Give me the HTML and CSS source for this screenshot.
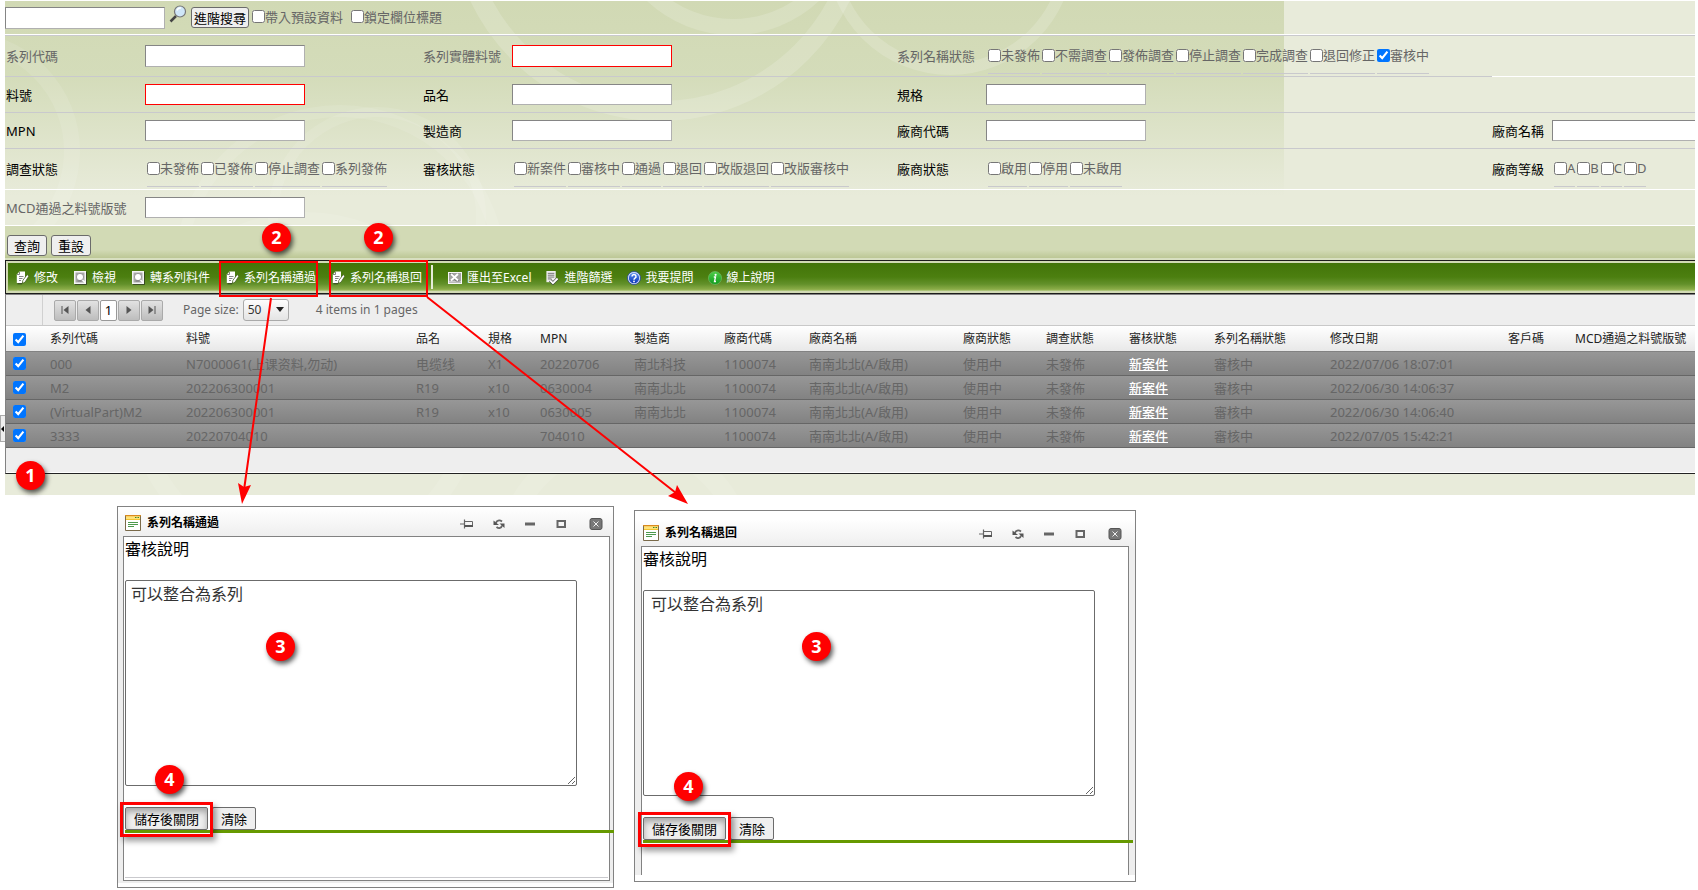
FILE: index.html
```html
<!DOCTYPE html>
<html lang="zh-Hant">
<head>
<meta charset="utf-8">
<title>系列料件</title>
<link rel="stylesheet" href="styles.css">
</head>
<body>
<svg class="defs" aria-hidden="true">
  <defs>
    <linearGradient id="gBlue" x1="0" y1="0" x2="0" y2="1"><stop offset="0" stop-color="#5b8ff0"/><stop offset="1" stop-color="#0b35b8"/></linearGradient>
    <linearGradient id="gGreen" x1="0" y1="0" x2="0" y2="1"><stop offset="0" stop-color="#4fd04a"/><stop offset="1" stop-color="#0f9a1c"/></linearGradient>
    <symbol id="i-edit" viewBox="0 0 13 14">
      <path d="M3.500.5H9v8l-3 3.500H.8V3.500z" fill="#fff"/><path d="M3.500 1v2.500H1M3 5.500h4.500M3 7.500h3.500M3 9.500h2" stroke="#777" fill="none" stroke-width=".9"/>
      <path d="M11.200 3.500L6.800 9.500L6.300 12.500L9 11.200L12.800 5.200z" fill="#fff" stroke="#33530c" stroke-width=".7"/><path d="M1.500 12.800h4.500" stroke="#222" stroke-opacity=".7"/>
    </symbol>
    <symbol id="i-view" viewBox="0 0 13 14">
      <path d="M0 0h12v13H0z" fill="#f4f4f4"/><path d="M1.500 1.500h9v10h-9z" fill="#a9a9a9"/><circle cx="6" cy="6" r="3.600" fill="#fff" stroke="#8a8a8a" stroke-width=".8"/><path d="M3.500 10h4" stroke="#777"/><path d="M8.500 9l2.500 2.500" stroke="#fff" stroke-width="1.500"/><path d="M12.500 1v12.500H1" stroke="#222" stroke-opacity=".6" fill="none"/>
    </symbol>
    <symbol id="i-excel" viewBox="0 0 14 14">
      <path d="M0 1h14v12H0z" fill="#f6f6f6"/><path d="M1 2h12v8.500H1z" fill="#a2a2a2"/><path d="M1 2h3l8 8.500H8z" fill="#777"/><path d="M3 3l7 6.500M10 3L3 9.500" stroke="#fff" stroke-width="1.800"/><path d="M1 11.500h12" stroke="#bbb"/>
    </symbol>
    <symbol id="i-filter" viewBox="0 0 14 15">
      <path d="M1 0h10v12H1z" fill="#eee"/><path d="M2.500 2.500h7M2.500 4.500h7M2.500 6.500h7M2.500 8.500h4" stroke="#6d6d6d"/><path d="M5 10l3 3 5-5" stroke="#333" stroke-width="3.200" fill="none"/><path d="M5 10l3 3 5-5" stroke="#fff" stroke-width="2" fill="none"/>
    </symbol>
    <symbol id="i-help" viewBox="0 0 14 14">
      <circle cx="7" cy="7" r="6.500" fill="#e8eefc" stroke="#1a3c9c" stroke-width=".8"/><circle cx="7" cy="7" r="5.200" fill="url(#gBlue)"/><path d="M5 5.500a2 2 0 1 1 3 1.700q-1 .6-1 1.500" stroke="#fff" stroke-width="1.500" fill="none"/><circle cx="7" cy="10.400" r=".9" fill="#fff"/>
    </symbol>
    <symbol id="i-info" viewBox="0 0 14 14">
      <circle cx="7" cy="7" r="6.500" fill="url(#gGreen)" stroke="#6fb560" stroke-width=".8"/><circle cx="7.600" cy="3.800" r="1.100" fill="#fff"/><path d="M5.800 6h1.700l-1 4.500h1.500" stroke="#fff" stroke-width="1.300" fill="none"/>
    </symbol>
    <symbol id="i-first" viewBox="0 0 10 10"><path d="M2 1v8" stroke="#555" stroke-width="1"/><path d="M8.500 1v8L3.500 5z" fill="#555"/></symbol>
    <symbol id="i-prev" viewBox="0 0 10 10"><path d="M7.500 1v8L2.500 5z" fill="#555"/></symbol>
    <symbol id="i-next" viewBox="0 0 10 10"><path d="M2.500 1v8L7.500 5z" fill="#555"/></symbol>
    <symbol id="i-last" viewBox="0 0 10 10"><path d="M1.500 1v8L6.500 5z" fill="#555"/><path d="M8 1v8" stroke="#555"/></symbol>
    <symbol id="i-window" viewBox="0 0 16 16">
      <path d="M.5.500h15v15H.5z" fill="#fff" stroke="#7a6a4a"/><path d="M1 1h14v4H1z" fill="#ffe27a"/><path d="M0 0h16v1.200H0z" fill="#d98a1e"/><path d="M1 4.500h14" stroke="#f2c230"/><path d="M10 2.500h1.500M12.500 2.500H14" stroke="#3b8a2a" stroke-width="1.200"/><path d="M3 7.500h10M3 9.500h10M3 11.500h6" stroke="#4c9a4c"/>
    </symbol>
    <symbol id="i-pin" viewBox="0 0 14 12"><path d="M0 6h4.500M4.500 1.500v9" stroke="#666" stroke-width="1.200"/><path d="M4.500 3.500h8v5h-8" fill="none" stroke="#666"/><path d="M4.500 8h8.500" stroke="#555" stroke-width="2"/></symbol>
    <symbol id="i-reload" viewBox="0 0 12 12"><path d="M3 5C3.500 2.500 6.500 1.500 9 3.500" fill="none" stroke="#666" stroke-width="1.800"/><path d="M.5 2.500v4.500H6z" fill="#555"/><path d="M9 7.500C8.500 10 6 11 3.500 9" fill="none" stroke="#666" stroke-width="1.800"/><path d="M11.500 10V5.500H6.500z" fill="#555"/></symbol>
    <symbol id="i-min" viewBox="0 0 12 12"><path d="M1 4.500h10v3H1z" fill="#666"/></symbol>
    <symbol id="i-max" viewBox="0 0 12 12"><path d="M2.500 3h7.500v6H2.500z" fill="none" stroke="#666" stroke-width="2"/></symbol>
    <symbol id="i-close" viewBox="0 0 14 12"><rect x="1" y=".5" width="12" height="11" rx="2" fill="#777" stroke="#555"/><path d="M4.500 3.500l5 5M9.500 3.500l-5 5" stroke="#eee"/></symbol>
  </defs>
</svg>

<main class="app">
  <svg class="swirls" aria-hidden="true" fill="none" stroke="#fff">
    <g stroke-opacity=".16">
      <circle cx="728" cy="-92" r="118" stroke-width="16"/>
      <circle cx="655" cy="-90" r="200" stroke-width="20"/>
      <circle cx="945" cy="-50" r="118" stroke-width="12"/>
    </g>
    <g stroke-opacity=".1">
      <circle cx="-45" cy="150" r="112" stroke-width="16"/>
      <circle cx="372" cy="215" r="104" stroke-width="10"/>
      <circle cx="335" cy="270" r="160" stroke-width="12"/>
      <circle cx="300" cy="390" r="170" stroke-width="18"/>
      <circle cx="620" cy="560" r="120" stroke-width="20"/>
    </g>
  </svg>

  <section class="searchbar">
    <input class="txt" type="text" aria-label="搜尋">
    <svg class="lens" viewBox="0 0 18 18" aria-hidden="true"><path d="M7 11L1.500 16.500" stroke="#444" stroke-width="2.500"/><circle cx="11" cy="6.500" r="5.500" fill="#cfe6f8" stroke="#777" stroke-width="1.200"/><path d="M8 5.500q1-3 4-2.500" stroke="#fff" stroke-width="1.500" fill="none"/></svg>
    <button class="btn btn-tight" type="button">進階搜尋</button>
    <label class="opt"><input type="checkbox">帶入預設資料</label>
    <label class="opt opt-next"><input type="checkbox">鎖定欄位標題</label>
  </section>

  <section class="filters">
    <div class="frow tall">
      <label class="cell dim" for="f1">系列代碼</label><div class="cell"><input class="txt" id="f1" type="text"></div>
      <label class="cell dim" for="f2">系列實體料號</label><div class="cell"><input class="txt req" id="f2" type="text"></div>
      <span class="cell dim">系列名稱狀態</span>
      <div class="cell checks">
        <label><input type="checkbox">未發佈</label><label><input type="checkbox">不需調查</label><label><input type="checkbox">發佈調查</label><label><input type="checkbox">停止調查</label><label><input type="checkbox">完成調查</label><label><input type="checkbox">退回修正</label><label><input type="checkbox" checked>審核中</label>
      </div>
      <span class="cell pale rest"></span>
    </div>
    <div class="frow">
      <label class="cell" for="f3">料號</label><div class="cell"><input class="txt req" id="f3" type="text"></div>
      <label class="cell" for="f4">品名</label><div class="cell"><input class="txt" id="f4" type="text"></div>
      <label class="cell" for="f5">規格</label><div class="cell"><input class="txt" id="f5" type="text"></div>
      <span class="cell rest"></span>
    </div>
    <div class="frow">
      <label class="cell" for="f6">MPN</label><div class="cell"><input class="txt" id="f6" type="text"></div>
      <label class="cell" for="f7">製造商</label><div class="cell"><input class="txt" id="f7" type="text"></div>
      <label class="cell" for="f8">廠商代碼</label><div class="cell"><input class="txt" id="f8" type="text"></div>
      <label class="cell" for="f9">廠商名稱</label><div class="cell clip"><input class="txt" id="f9" type="text"></div>
    </div>
    <div class="frow tall last">
      <span class="cell">調查狀態</span>
      <div class="cell checks"><label><input type="checkbox">未發佈</label><label><input type="checkbox">已發佈</label><label><input type="checkbox">停止調查</label><label><input type="checkbox">系列發佈</label></div>
      <span class="cell">審核狀態</span>
      <div class="cell checks"><label><input type="checkbox">新案件</label><label><input type="checkbox">審核中</label><label><input type="checkbox">通過</label><label><input type="checkbox">退回</label><label><input type="checkbox">改版退回</label><label><input type="checkbox">改版審核中</label></div>
      <span class="cell">廠商狀態</span>
      <div class="cell checks"><label><input type="checkbox">啟用</label><label><input type="checkbox">停用</label><label><input type="checkbox">未啟用</label></div>
      <span class="cell">廠商等級</span>
      <div class="cell checks"><label><input type="checkbox">A</label><label><input type="checkbox">B</label><label><input type="checkbox">C</label><label><input type="checkbox">D</label></div>
    </div>
    <div class="frow last">
      <label class="cell dim" for="f10">MCD通過之料號版號</label><div class="cell"><input class="txt" id="f10" type="text"></div>
      <span class="cell wide"></span>
    </div>
  </section>

  <section class="actions">
    <button class="btn" type="button">查詢</button>
    <button class="btn" type="button">重設</button>
  </section>

  <nav class="toolbar">
    <div class="tools">
      <button type="button"><svg><use href="#i-edit"/></svg>修改</button>
      <button type="button"><svg><use href="#i-view"/></svg>檢視</button>
      <button type="button"><svg><use href="#i-view"/></svg>轉系列料件</button>
      <button type="button"><svg><use href="#i-edit"/></svg>系列名稱通過</button>
      <button type="button"><svg><use href="#i-edit"/></svg>系列名稱退回</button>
    </div>
    <div class="tools tools-more">
      <button type="button"><svg><use href="#i-excel"/></svg>匯出至Excel</button>
      <button type="button"><svg><use href="#i-filter"/></svg>進階篩選</button>
      <button type="button"><svg><use href="#i-help"/></svg>我要提問</button>
      <button type="button"><svg><use href="#i-info"/></svg>線上說明</button>
    </div>
  </nav>

  <section class="grid">
    <div class="pager">
      <span class="pager-gap"></span>
      <div class="pages">
        <button type="button" aria-label="首頁"><svg><use href="#i-first"/></svg></button>
        <button type="button" aria-label="上一頁"><svg><use href="#i-prev"/></svg></button>
        <button type="button" class="current">1</button>
        <button type="button" aria-label="下一頁"><svg><use href="#i-next"/></svg></button>
        <button type="button" aria-label="末頁"><svg><use href="#i-last"/></svg></button>
      </div>
      <label class="size-label" for="psize">Page size:</label>
      <span class="size"><select id="psize"><option>50</option></select><svg viewBox="0 0 8 5" aria-hidden="true"><path d="M0 0h8L4 5z" fill="#222"/></svg></span>
      <span class="count">4 items in 1 pages</span>
    </div>
    <table>
      <colgroup><col class="c36"><col class="c136"><col class="c230"><col class="c72"><col class="c52"><col class="c94"><col class="c90"><col class="c85"><col class="c154"><col class="c83"><col class="c83"><col class="c85"><col class="c116"><col class="c178"><col class="c67"><col class="c128"></colgroup>
      <thead>
        <tr><th><input type="checkbox" checked aria-label="全選"></th><th>系列代碼</th><th>料號</th><th>品名</th><th>規格</th><th>MPN</th><th>製造商</th><th>廠商代碼</th><th>廠商名稱</th><th>廠商狀態</th><th>調查狀態</th><th>審核狀態</th><th>系列名稱狀態</th><th>修改日期</th><th>客戶碼</th><th>MCD通過之料號版號</th></tr>
      </thead>
      <tbody>
        <tr><td><input type="checkbox" checked aria-label="選取 000"></td><td>000</td><td>N7000061(上课资料,勿动)</td><td>电缆线</td><td>X1</td><td>20220706</td><td>南北科技</td><td>1100074</td><td>南南北北(A/啟用)</td><td>使用中</td><td>未發佈</td><td><a href="#">新案件</a></td><td>審核中</td><td>2022/07/06 18:07:01</td><td></td><td></td></tr>
        <tr><td><input type="checkbox" checked aria-label="選取 M2"></td><td>M2</td><td>202206300001</td><td>R19</td><td>x10</td><td>0630004</td><td>南南北北</td><td>1100074</td><td>南南北北(A/啟用)</td><td>使用中</td><td>未發佈</td><td><a href="#">新案件</a></td><td>審核中</td><td>2022/06/30 14:06:37</td><td></td><td></td></tr>
        <tr><td><input type="checkbox" checked aria-label="選取 (VirtualPart)M2"></td><td>(VirtualPart)M2</td><td>202206300001</td><td>R19</td><td>x10</td><td>0630005</td><td>南南北北</td><td>1100074</td><td>南南北北(A/啟用)</td><td>使用中</td><td>未發佈</td><td><a href="#">新案件</a></td><td>審核中</td><td>2022/06/30 14:06:40</td><td></td><td></td></tr>
        <tr><td><input type="checkbox" checked aria-label="選取 3333"></td><td>3333</td><td>20220704010</td><td></td><td></td><td>704010</td><td></td><td>1100074</td><td>南南北北(A/啟用)</td><td>使用中</td><td>未發佈</td><td><a href="#">新案件</a></td><td>審核中</td><td>2022/07/05 15:42:21</td><td></td><td></td></tr>
      </tbody>
    </table>
    <div class="grid-foot"></div>
  </section>
</main>

<button class="splitter" type="button" aria-label="展開"></button>

<section class="windows">
  <article class="win">
    <header class="win-head">
      <svg class="win-icon"><use href="#i-window"/></svg>
      <h2>系列名稱通過</h2>
      <div class="win-tools">
        <button type="button" aria-label="固定"><svg><use href="#i-pin"/></svg></button>
        <button type="button" aria-label="重新整理"><svg><use href="#i-reload"/></svg></button>
        <button type="button" aria-label="最小化"><svg><use href="#i-min"/></svg></button>
        <button type="button" aria-label="最大化"><svg><use href="#i-max"/></svg></button>
        <button type="button" class="close" aria-label="關閉"><svg><use href="#i-close"/></svg></button>
      </div>
    </header>
    <div class="win-body">
      <label for="note1">審核說明</label>
      <textarea id="note1">可以整合為系列</textarea>
      <div class="win-actions"><span class="mark"><button class="btn" type="button">儲存後關閉</button></span><button class="btn" type="button">清除</button></div>
      <div class="rule"></div>
      <div class="win-end"></div>
    </div>
  </article>
  <article class="win win-b">
    <header class="win-head">
      <svg class="win-icon"><use href="#i-window"/></svg>
      <h2>系列名稱退回</h2>
      <div class="win-tools">
        <button type="button" aria-label="固定"><svg><use href="#i-pin"/></svg></button>
        <button type="button" aria-label="重新整理"><svg><use href="#i-reload"/></svg></button>
        <button type="button" aria-label="最小化"><svg><use href="#i-min"/></svg></button>
        <button type="button" aria-label="最大化"><svg><use href="#i-max"/></svg></button>
        <button type="button" class="close" aria-label="關閉"><svg><use href="#i-close"/></svg></button>
      </div>
    </header>
    <div class="win-body">
      <label for="note2">審核說明</label>
      <textarea id="note2">可以整合為系列</textarea>
      <div class="win-actions"><span class="mark"><button class="btn" type="button">儲存後關閉</button></span><button class="btn" type="button">清除</button></div>
      <div class="rule"></div>
      <div class="win-end"></div>
    </div>
  </article>
</section>

<svg class="arrows" aria-hidden="true">
  <g fill="none" stroke="#f00" stroke-width="2">
    <rect x="220" y="262" width="97" height="34"/><rect x="330" y="261" width="97" height="35"/>
    <path d="M271 298L244 490M427 297L676 493"/>
  </g>
  <path d="M242 504L238 483L244 487L251 485zM688 504L668 496L675 492L677 485z" fill="#f00"/>
</svg>
<span class="badge b1">1</span>
<span class="badge b2">2</span>
<span class="badge b3">2</span>
<span class="badge b4">3</span>
<span class="badge b5">4</span>
<span class="badge b6">3</span>
<span class="badge b7">4</span>
</body>
</html>
```
FILE: styles.css
```css
* { box-sizing: border-box; }
body {
  margin: 0;
  padding: 1px 3px 0 5px;
  position: relative;
  background: #fff;
  font: 13px/16px "Noto Sans", "Noto Sans CJK TC", sans-serif;
  color: #000;
}
button, input, select, textarea { font: inherit; color: inherit; margin: 0; }
input[type="checkbox"] { width: 13px; height: 13px; flex: none; }
.defs { position: absolute; width: 0; height: 0; }

.app {
  position: relative;
  z-index: 0;
  padding-bottom: 21px;
  background: linear-gradient(#d1d9b4, #d4dcba 76px, #e8ebda 195px) 0 0 / 1279px 100% no-repeat #e8ebda;
}
.swirls { position: absolute; inset: 0; width: 1279px; height: 100%; z-index: -1; max-width: 100%; }

.txt {
  width: 160px;
  height: 21px;
  border: 1px solid #b0b0b0;
  border-top-color: #858585;
  border-left-color: #858585;
  background: #fff;
  padding: 1px 2px;
}
.tall .txt, .searchbar .txt { height: 22px; }
.txt.req { border-color: #f00; }
.btn {
  height: 21px;
  padding: 0 6px;
  border: 1px solid #6b6b6b;
  border-radius: 3px;
  background: #efefef;
  white-space: nowrap;
}
.btn-tight { padding: 0 2px; }

.searchbar {
  display: flex;
  align-items: center;
  height: 34px;
  border-bottom: 1px solid #fff;
  color: #666;
}
.searchbar .btn { color: #000; }
.lens { width: 18px; height: 18px; margin: 0 4px 8px; }
.opt { display: flex; align-items: center; margin: 0 0 2px 3px; }
.opt-next { margin-left: 8px; }

.filters { border-top: 1px solid #c9c9cd; }
.frow {
  display: grid;
  grid-template-columns: 140px minmax(0, 278fr) 89px minmax(0, 385fr) 89px minmax(0, 506fr) 60px minmax(0, 143fr);
  min-height: 36px;
}
.frow.tall { min-height: 41px; }
.cell {
  display: flex;
  align-items: center;
  border-bottom: 1px solid #c9c9cd;
  white-space: nowrap;
}
.cell:first-child { padding-left: 1px; }
.cell.dim { color: #666; }
.last .cell, .cell.pale { border-bottom-color: #fff; }
.rest { grid-column: 7 / -1; }
.wide { grid-column: 3 / -1; }
.clip { overflow: hidden; }
.clip .txt { flex: none; }
.cell.checks { gap: 2px; padding-left: 2px; color: #666; }
.checks label {
  display: flex;
  align-items: center;
  padding: 9px 0 10px;
  border-bottom: 1px solid #c9c9cd;
}

.actions {
  display: flex;
  gap: 4px;
  padding: 9px 2px 4px;
  background: linear-gradient(#d2dab5 24px, #bcc795 32px, #d8dfc0 32px);
}

.toolbar {
  display: flex;
  padding: 2px 0 2px 2px;
  border: 1px solid #1c1c1c;
  border-right: 0;
  background: #d2dab5;
}
.tools {
  display: flex;
  align-items: center;
  gap: 16px;
  height: 28px;
  padding: 1px 9px 0 8px;
  background: linear-gradient(#427409, #4c7f10 50%, #62902a 75%, #8bad48 94%, #b9cd8c);
}
.tools button {
  display: flex;
  align-items: center;
  gap: 5px;
  padding: 0;
  border: 0;
  background: none;
  color: #fff;
  font-size: 12px;
  white-space: nowrap;
}
.tools svg { width: 13px; height: 14px; }
.tools-more { flex: 1; gap: 14px; padding-left: 17px; position: relative; }
.tools-more svg { width: 14px; }
.tools-more::before { content: ""; position: absolute; left: 0; top: 2px; bottom: 2px; width: 2px; background: #e6ecd8; }

.grid { border-top: 1px solid #828282; border-bottom: 1px solid #222; border-left: 1px solid #828282; background: #eee; }
.pager { display: flex; align-items: center; height: 31px; border-bottom: 1px solid #c9c9c9; color: #666; font-size: 12px; }
.pager-gap { width: 37px; align-self: stretch; border-right: 1px solid #d0d0d0; }
.pages { display: flex; gap: 1px; margin-left: 11px; }
.pages button {
  display: grid;
  place-items: center;
  width: 22px;
  height: 21px;
  padding: 0;
  border: 1px solid #aaa;
  border-radius: 2px;
  background: linear-gradient(#e2e2e2, #bdbdbd);
}
.pages button svg { width: 10px; height: 10px; }
.pages .current { width: 17px; background: #fff; border-color: #999; color: #000; font-size: 13px; }
.size-label { margin-left: 20px; }
.size { position: relative; margin-left: 4px; }
.size select {
  appearance: none;
  display: block;
  width: 46px;
  height: 22px;
  padding: 0 4px;
  border: 1px solid #aaa;
  border-radius: 3px;
  background: linear-gradient(#fdfdfd, #e4e4e4);
  color: #333;
}
.size svg { position: absolute; right: 5px; top: 8px; width: 8px; height: 5px; }
.count { margin-left: 27px; }

table { width: 100%; table-layout: fixed; border-collapse: separate; border-spacing: 0; }
th, td { padding: 0 0 0 7px; text-align: left; white-space: nowrap; vertical-align: middle; }
th:first-child, td:first-child { padding-left: 7px; }
th { height: 26px; padding-top: 1px; font-weight: 400; font-size: 12px; color: #222; border-bottom: 1px solid #828282; background: linear-gradient(#fff, #e8e8e8); }
td { height: 24px; color: #666; border-bottom: 1px solid #666; background: linear-gradient(#979797, #828282); }
th input, td input { display: block; }
td a { color: #fff; font-weight: 500; }
.c36 { width: 37px; } .c136 { width: 136px; } .c230 { width: 230px; } .c72 { width: 72px; }
.c52 { width: 52px; } .c94 { width: 94px; } .c90 { width: 90px; } .c85 { width: 85px; }
.c154 { width: 154px; } .c83 { width: 83px; } .c116 { width: 116px; } .c178 { width: 178px; }
.c67 { width: 67px; } .c128 { width: 127px; }
.grid-foot { height: 25px; border-bottom: 1px solid #fff; }

.splitter {
  position: absolute;
  left: 0;
  top: 415px;
  width: 5px;
  height: 27px;
  padding: 0;
  border: 1px solid #aaa;
  border-width: 1px 0 1px 1px;
  background: #eee;
}
.splitter::after { content: ""; position: absolute; left: 0; top: 10px; border: 3px solid transparent; border-left: 0; border-right-color: #000; }

.windows { display: flex; align-items: flex-start; gap: 20px; padding: 11px 0 2px 112px; }
.win {
  width: 497px;
  padding: 0 3px 6px 5px;
  border: 1px solid #828282;
  background: linear-gradient(#fff, #eee 30px, #eee 376px, #fff 376px);
}
.win-head { display: flex; align-items: center; height: 29px; padding: 3px 7px 0 2px; }
.win-icon { width: 16px; height: 16px; }
.win h2 { margin: 0 0 0 6px; font-size: 12px; font-weight: 700; line-height: 16px; }
.win-tools { display: flex; gap: 19px; margin-left: auto; }
.win-tools button { display: block; padding: 2px 0 0; border: 0; background: none; }
.win-tools svg { display: block; width: 12px; height: 12px; }
.win-tools button:first-child svg, .win-tools .close svg { width: 14px; }
.win-tools .close { margin-left: 3px; }
.win-body { border: 1px solid #828282; background: #fff; padding: 0 1px 2px; }
.win-body label { display: block; font-size: 16px; line-height: 24px; }
.win-body textarea {
  display: block;
  width: 452px;
  height: 206px;
  margin-top: 19px;
  padding: 1px 5px;
  border: 1px solid #6b6b6b;
  border-radius: 2px;
  font-size: 16px;
  line-height: 24px;
  color: #333;
}
.win-actions { display: flex; gap: 4px; margin-top: 21px; }
.win-actions .btn { height: 23px; padding: 0 8px; border-radius: 2px; }
.win-actions .mark .btn { padding: 0 7px; width: 83px; }
.mark { position: relative; display: block; }
.mark .btn { box-shadow: inset 0 4px 6px rgba(0, 0, 0, .3); }
.mark::after {
  content: "";
  position: absolute;
  inset: -5px -5px -7px;
  border: 3px solid #f00;
  box-shadow: 3px 4px 6px rgba(0, 0, 0, .4);
  pointer-events: none;
  z-index: 1;
}
.rule { height: 3px; margin-right: -6px; background: #690; }
.win-end { height: 45px; border-bottom: 1px solid #c9c9cd; }
.win-b {
  width: 502px;
  margin-top: 4px;
  padding: 6px 6px 6px 6px;
  background: linear-gradient(#fff 8px, #eee 36px, #eee 364px, #fff 364px);
}
.win-b .win-body { border-bottom: 0; }
.win-b .win-end { height: 30px; border-bottom: 0; }
.win-b textarea { padding-left: 7px; }

.arrows { position: absolute; left: 0; top: 0; width: 700px; height: 510px; pointer-events: none; z-index: 2; }
.badge {
  position: absolute;
  width: 29px;
  height: 29px;
  border-radius: 50%;
  background: #f00;
  box-shadow: 2px 3px 5px rgba(0, 0, 0, .65);
  color: #fff;
  font-size: 18px;
  font-weight: 700;
  line-height: 29px;
  text-align: center;
  z-index: 3;
}
.b1 { left: 16px; top: 461px; }
.b2 { left: 262px; top: 223px; }
.b3 { left: 364px; top: 223px; }
.b4 { left: 266px; top: 632px; }
.b5 { left: 155px; top: 765px; }
.b6 { left: 802px; top: 632px; }
.b7 { left: 674px; top: 772px; }
```
